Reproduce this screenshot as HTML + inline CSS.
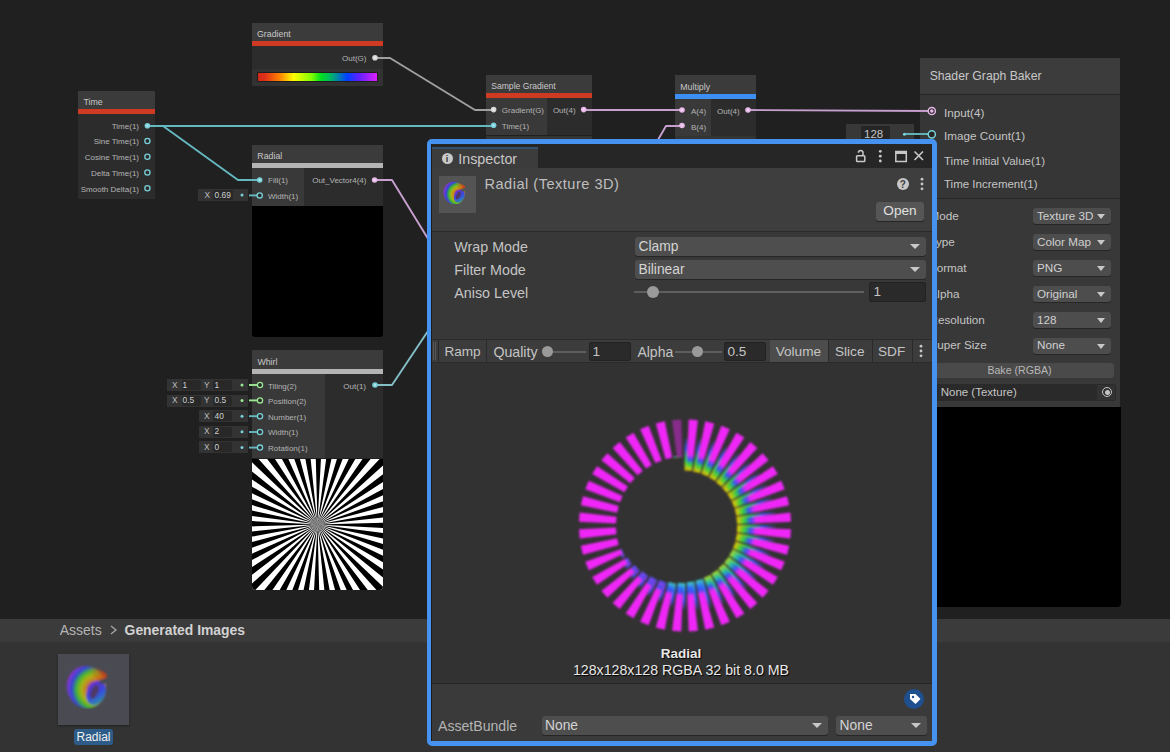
<!DOCTYPE html>
<html><head><meta charset="utf-8"><style>
html,body{margin:0;padding:0;width:1170px;height:752px;overflow:hidden;background:#202020;font-family:"Liberation Sans", sans-serif;}
body>div, #ins div{position:absolute;}
.t{white-space:pre;line-height:0;height:0;}
</style></head><body>
<div style="left:0px;top:0px;width:1170px;height:619px;background:#202020;"></div>
<div style="left:78px;top:91px;width:77px;height:18px;background:#3b3b3b;"></div>
<div style="left:78px;top:109px;width:77px;height:5px;background:#cf3a22;"></div>
<div style="left:78px;top:114px;width:77px;height:85px;background:#2c2c2c;"></div>
<div class="t" style="left:83.5px;top:101.95px;font-size:8.8px;color:#c8c8c8;font-weight:400;letter-spacing:0px;">Time</div>
<div class="t" style="right:1031px;top:126.53px;font-size:8px;color:#b4b4b4;font-weight:400;letter-spacing:0px;text-align:right;">Time(1)</div>
<div class="t" style="right:1031px;top:142.28px;font-size:8px;color:#b4b4b4;font-weight:400;letter-spacing:0px;text-align:right;">Sine Time(1)</div>
<div class="t" style="right:1031px;top:158.03px;font-size:8px;color:#b4b4b4;font-weight:400;letter-spacing:0px;text-align:right;">Cosine Time(1)</div>
<div class="t" style="right:1031px;top:173.78px;font-size:8px;color:#b4b4b4;font-weight:400;letter-spacing:0px;text-align:right;">Delta Time(1)</div>
<div class="t" style="right:1031px;top:189.53px;font-size:8px;color:#b4b4b4;font-weight:400;letter-spacing:0px;text-align:right;">Smooth Delta(1)</div>
<div style="left:252px;top:23px;width:131px;height:18px;background:#3b3b3b;"></div>
<div style="left:252px;top:41px;width:131px;height:5px;background:#cf3a22;"></div>
<div style="left:252px;top:46px;width:131px;height:23px;background:#2c2c2c;"></div>
<div style="left:252px;top:69px;width:131px;height:17px;background:#323232;"></div>
<div class="t" style="left:257px;top:33.95px;font-size:8.8px;color:#c8c8c8;font-weight:400;letter-spacing:0px;">Gradient</div>
<div class="t" style="right:803.5px;top:59.03px;font-size:8px;color:#b4b4b4;font-weight:400;letter-spacing:0px;text-align:right;">Out(G)</div>
<div style="left:258px;top:73px;width:119px;height:8px;background:linear-gradient(90deg,#d02a1a 0%,#e0301a 6%,#ff8000 18%,#ffff00 30%,#80ff00 45%,#00e020 53%,#00b070 62%,#0040ff 75%,#6020ff 85%,#e020ff 100%);outline:1px solid #1e1e1e"></div>
<div style="left:486px;top:75px;width:106px;height:18px;background:#3b3b3b;"></div>
<div style="left:486px;top:93px;width:106px;height:5px;background:#cf3a22;"></div>
<div style="left:486px;top:98px;width:106px;height:37px;background:#2c2c2c;"></div>
<div style="left:486px;top:98px;width:61px;height:37px;background:#393939;"></div>
<div style="left:486px;top:136px;width:106px;height:3px;background:#343434;"></div>
<div class="t" style="left:491.2px;top:86.02px;font-size:8.6px;color:#c8c8c8;font-weight:400;letter-spacing:0px;">Sample Gradient</div>
<div class="t" style="left:501.8px;top:111.03px;font-size:8px;color:#b4b4b4;font-weight:400;letter-spacing:0px;">Gradient(G)</div>
<div class="t" style="left:501.8px;top:126.83px;font-size:8px;color:#b4b4b4;font-weight:400;letter-spacing:0px;">Time(1)</div>
<div class="t" style="left:552.9px;top:111.03px;font-size:8px;color:#b4b4b4;font-weight:400;letter-spacing:0px;">Out(4)</div>
<div style="left:675px;top:75px;width:81px;height:19px;background:#3b3b3b;"></div>
<div style="left:675px;top:94px;width:81px;height:5px;background:#3d8ef2;"></div>
<div style="left:675px;top:99px;width:81px;height:37px;background:#2c2c2c;"></div>
<div style="left:675px;top:99px;width:36px;height:37px;background:#393939;"></div>
<div style="left:675px;top:136px;width:81px;height:3px;background:#343434;"></div>
<div class="t" style="left:680.3px;top:87.15px;font-size:8.8px;color:#c8c8c8;font-weight:400;letter-spacing:0px;">Multiply</div>
<div class="t" style="left:691px;top:112.03px;font-size:8px;color:#b4b4b4;font-weight:400;letter-spacing:0px;">A(4)</div>
<div class="t" style="left:691px;top:127.63px;font-size:8px;color:#b4b4b4;font-weight:400;letter-spacing:0px;">B(4)</div>
<div class="t" style="left:717px;top:112.03px;font-size:8px;color:#b4b4b4;font-weight:400;letter-spacing:0px;">Out(4)</div>
<div style="left:252px;top:145px;width:131px;height:18px;background:#3b3b3b;"></div>
<div style="left:252px;top:163px;width:131px;height:5px;background:#b4b4b4;"></div>
<div style="left:252px;top:168px;width:131px;height:38px;background:#2c2c2c;"></div>
<div style="left:252px;top:168px;width:52px;height:38px;background:#393939;"></div>
<div style="left:252px;top:206px;width:131px;height:131px;background:#000000;border-radius:0 0 3px 3px"></div>
<div class="t" style="left:257.3px;top:155.95px;font-size:8.8px;color:#c8c8c8;font-weight:400;letter-spacing:0px;">Radial</div>
<div class="t" style="left:268px;top:181.03px;font-size:8px;color:#b4b4b4;font-weight:400;letter-spacing:0px;">Fill(1)</div>
<div class="t" style="left:268px;top:196.93px;font-size:8px;color:#b4b4b4;font-weight:400;letter-spacing:0px;">Width(1)</div>
<div class="t" style="right:803.6px;top:181.03px;font-size:8px;color:#b4b4b4;font-weight:400;letter-spacing:0px;text-align:right;">Out_Vector4(4)</div>
<div style="left:198px;top:189px;width:50px;height:12px;background:#333333;"></div>
<div style="left:213px;top:190px;width:20px;height:10px;background:#282828;border-radius:2px"></div>
<div class="t" style="left:204.5px;top:195.09px;font-size:8.4px;color:#bdbdbd;font-weight:400;letter-spacing:0px;">X</div>
<div class="t" style="left:214.5px;top:195.09px;font-size:8.4px;color:#cfcfcf;font-weight:400;letter-spacing:0px;">0.69</div>
<div style="left:252px;top:350px;width:131px;height:19px;background:#3b3b3b;"></div>
<div style="left:252px;top:369px;width:131px;height:5px;background:#b4b4b4;"></div>
<div style="left:252px;top:374px;width:131px;height:84px;background:#2c2c2c;"></div>
<div style="left:252px;top:374px;width:73px;height:84px;background:#393939;"></div>
<div class="t" style="left:257.4px;top:361.95px;font-size:8.8px;color:#c8c8c8;font-weight:400;letter-spacing:0px;">Whirl</div>
<div class="t" style="left:268px;top:386.53px;font-size:8px;color:#b4b4b4;font-weight:400;letter-spacing:0px;">Tiling(2)</div>
<div class="t" style="left:268px;top:402.13px;font-size:8px;color:#b4b4b4;font-weight:400;letter-spacing:0px;">Position(2)</div>
<div class="t" style="left:268px;top:417.73px;font-size:8px;color:#b4b4b4;font-weight:400;letter-spacing:0px;">Number(1)</div>
<div class="t" style="left:268px;top:433.33px;font-size:8px;color:#b4b4b4;font-weight:400;letter-spacing:0px;">Width(1)</div>
<div class="t" style="left:268px;top:448.93px;font-size:8px;color:#b4b4b4;font-weight:400;letter-spacing:0px;">Rotation(1)</div>
<div class="t" style="right:804px;top:386.53px;font-size:8px;color:#b4b4b4;font-weight:400;letter-spacing:0px;text-align:right;">Out(1)</div>
<div style="left:167px;top:379.0px;width:81px;height:12px;background:#333333;"></div>
<div style="left:181.5px;top:380.0px;width:19px;height:10px;background:#282828;border-radius:2px"></div>
<div style="left:213.3px;top:380.0px;width:19px;height:10px;background:#282828;border-radius:2px"></div>
<div class="t" style="left:172px;top:384.69px;font-size:8.4px;color:#bdbdbd;font-weight:400;letter-spacing:0px;">X</div>
<div class="t" style="left:182.5px;top:384.69px;font-size:8.4px;color:#cfcfcf;font-weight:400;letter-spacing:0px;">1</div>
<div class="t" style="left:204px;top:384.69px;font-size:8.4px;color:#bdbdbd;font-weight:400;letter-spacing:0px;">Y</div>
<div class="t" style="left:214.5px;top:384.69px;font-size:8.4px;color:#cfcfcf;font-weight:400;letter-spacing:0px;">1</div>
<div style="left:167px;top:394.6px;width:81px;height:12px;background:#333333;"></div>
<div style="left:181.5px;top:395.6px;width:19px;height:10px;background:#282828;border-radius:2px"></div>
<div style="left:213.3px;top:395.6px;width:19px;height:10px;background:#282828;border-radius:2px"></div>
<div class="t" style="left:172px;top:400.29px;font-size:8.4px;color:#bdbdbd;font-weight:400;letter-spacing:0px;">X</div>
<div class="t" style="left:182.5px;top:400.29px;font-size:8.4px;color:#cfcfcf;font-weight:400;letter-spacing:0px;">0.5</div>
<div class="t" style="left:204px;top:400.29px;font-size:8.4px;color:#bdbdbd;font-weight:400;letter-spacing:0px;">Y</div>
<div class="t" style="left:214.5px;top:400.29px;font-size:8.4px;color:#cfcfcf;font-weight:400;letter-spacing:0px;">0.5</div>
<div style="left:199px;top:410.2px;width:49px;height:12px;background:#333333;"></div>
<div style="left:213.3px;top:411.2px;width:19px;height:10px;background:#282828;border-radius:2px"></div>
<div class="t" style="left:204px;top:415.89px;font-size:8.4px;color:#bdbdbd;font-weight:400;letter-spacing:0px;">X</div>
<div class="t" style="left:214.5px;top:415.89px;font-size:8.4px;color:#cfcfcf;font-weight:400;letter-spacing:0px;">40</div>
<div style="left:199px;top:425.8px;width:49px;height:12px;background:#333333;"></div>
<div style="left:213.3px;top:426.8px;width:19px;height:10px;background:#282828;border-radius:2px"></div>
<div class="t" style="left:204px;top:431.49px;font-size:8.4px;color:#bdbdbd;font-weight:400;letter-spacing:0px;">X</div>
<div class="t" style="left:214.5px;top:431.49px;font-size:8.4px;color:#cfcfcf;font-weight:400;letter-spacing:0px;">2</div>
<div style="left:199px;top:441.4px;width:49px;height:12px;background:#333333;"></div>
<div style="left:213.3px;top:442.4px;width:19px;height:10px;background:#282828;border-radius:2px"></div>
<div class="t" style="left:204px;top:447.09px;font-size:8.4px;color:#bdbdbd;font-weight:400;letter-spacing:0px;">X</div>
<div class="t" style="left:214.5px;top:447.09px;font-size:8.4px;color:#cfcfcf;font-weight:400;letter-spacing:0px;">0</div>
<div style="left:252px;top:459px;width:131px;height:131px;background:#fff;overflow:hidden;border-radius:0 0 4px 4px"><svg width="131" height="131" viewBox="252 459 131 131" style="position:absolute;left:0;top:0"><path d="M317.5,524.5L517.4,519.3L517.2,535.0Z M317.5,524.5L515.8,550.6L513.1,566.1Z M317.5,524.5L509.3,581.3L504.2,596.2Z M317.5,524.5L498.0,610.6L490.7,624.5Z M317.5,524.5L482.3,637.8L472.9,650.4Z M317.5,524.5L462.6,662.2L451.3,673.1Z M317.5,524.5L439.3,683.2L426.4,692.2Z M317.5,524.5L412.9,700.3L398.8,707.2Z M317.5,524.5L384.3,713.0L369.3,717.7Z M317.5,524.5L353.9,721.2L338.4,723.4Z M317.5,524.5L322.7,724.4L307.0,724.2Z M317.5,524.5L291.4,722.8L275.9,720.1Z M317.5,524.5L260.7,716.3L245.8,711.2Z M317.5,524.5L231.4,705.0L217.5,697.7Z M317.5,524.5L204.2,689.3L191.6,679.9Z M317.5,524.5L179.8,669.6L168.9,658.3Z M317.5,524.5L158.8,646.3L149.8,633.4Z M317.5,524.5L141.7,619.9L134.8,605.8Z M317.5,524.5L129.0,591.3L124.3,576.3Z M317.5,524.5L120.8,560.9L118.6,545.4Z M317.5,524.5L117.6,529.7L117.8,514.0Z M317.5,524.5L119.2,498.4L121.9,482.9Z M317.5,524.5L125.7,467.7L130.8,452.8Z M317.5,524.5L137.0,438.4L144.3,424.5Z M317.5,524.5L152.7,411.2L162.1,398.6Z M317.5,524.5L172.4,386.8L183.7,375.9Z M317.5,524.5L195.7,365.8L208.6,356.8Z M317.5,524.5L222.1,348.7L236.2,341.8Z M317.5,524.5L250.7,336.0L265.7,331.3Z M317.5,524.5L281.1,327.8L296.6,325.6Z M317.5,524.5L312.3,324.6L328.0,324.8Z M317.5,524.5L343.6,326.2L359.1,328.9Z M317.5,524.5L374.3,332.7L389.2,337.8Z M317.5,524.5L403.6,344.0L417.5,351.3Z M317.5,524.5L430.8,359.7L443.4,369.1Z M317.5,524.5L455.2,379.4L466.1,390.7Z M317.5,524.5L476.2,402.7L485.2,415.6Z M317.5,524.5L493.3,429.1L500.2,443.2Z M317.5,524.5L506.0,457.7L510.7,472.7Z M317.5,524.5L514.2,488.1L516.4,503.6Z" fill="#000"/></svg></div>
<div style="left:920px;top:58px;width:200px;height:36px;background:#3c3c3c;"></div>
<div style="left:920px;top:94px;width:200px;height:1px;background:#262626;"></div>
<div style="left:920px;top:95px;width:200px;height:104px;background:#363636;"></div>
<div style="left:920px;top:198px;width:200px;height:1px;background:#262626;"></div>
<div style="left:920px;top:199px;width:200px;height:209px;background:#383838;"></div>
<div style="left:920px;top:407px;width:201px;height:200px;background:#000000;border-radius:0 0 4px 4px"></div>
<div class="t" style="left:929.7px;top:75.77px;font-size:12.2px;color:#c8c8c8;font-weight:400;letter-spacing:0px;">Shader Graph Baker</div>
<div class="t" style="left:944px;top:112.95px;font-size:11.7px;color:#c4c4c4;font-weight:400;letter-spacing:0px;">Input(4)</div>
<div class="t" style="left:944px;top:135.95px;font-size:11.7px;color:#c4c4c4;font-weight:400;letter-spacing:0px;">Image Count(1)</div>
<div class="t" style="left:944px;top:160.82px;font-size:11.5px;color:#c4c4c4;font-weight:400;letter-spacing:0px;">Time Initial Value(1)</div>
<div class="t" style="left:944px;top:184.02px;font-size:11.5px;color:#c4c4c4;font-weight:400;letter-spacing:0px;">Time Increment(1)</div>
<div style="left:846px;top:124px;width:68px;height:22px;background:#383838;"></div>
<div style="left:861px;top:126px;width:29px;height:18px;background:#262626;"></div>
<div class="t" style="left:864px;top:134.02px;font-size:11.5px;color:#c4c4c4;font-weight:400;letter-spacing:0px;">128</div>
<div class="t" style="left:929.5px;top:215.95px;font-size:11.7px;color:#c4c4c4;font-weight:400;letter-spacing:0px;">Mode</div>
<div style="left:1032.5px;top:208.3px;width:78.5px;height:16px;background:#4d4d4d;border-radius:3px;box-shadow:0 1px 0 #262626"></div>
<div class="t" style="left:1037px;top:215.95px;font-size:11.7px;color:#d0d0d0;font-weight:400;letter-spacing:0px;">Texture 3D</div>
<div style="left:1097px;top:214.3px;width:0;height:0;border-left:4.5px solid transparent;border-right:4.5px solid transparent;border-top:5px solid #c8c8c8"></div>
<div class="t" style="left:929.5px;top:241.85px;font-size:11.7px;color:#c4c4c4;font-weight:400;letter-spacing:0px;">Type</div>
<div style="left:1032.5px;top:234.20000000000002px;width:78.5px;height:16px;background:#4d4d4d;border-radius:3px;box-shadow:0 1px 0 #262626"></div>
<div class="t" style="left:1037px;top:241.85px;font-size:11.7px;color:#d0d0d0;font-weight:400;letter-spacing:0px;">Color Map</div>
<div style="left:1097px;top:240.20000000000002px;width:0;height:0;border-left:4.5px solid transparent;border-right:4.5px solid transparent;border-top:5px solid #c8c8c8"></div>
<div class="t" style="left:929.5px;top:267.75px;font-size:11.7px;color:#c4c4c4;font-weight:400;letter-spacing:0px;">Format</div>
<div style="left:1032.5px;top:260.1px;width:78.5px;height:16px;background:#4d4d4d;border-radius:3px;box-shadow:0 1px 0 #262626"></div>
<div class="t" style="left:1037px;top:267.75px;font-size:11.7px;color:#d0d0d0;font-weight:400;letter-spacing:0px;">PNG</div>
<div style="left:1097px;top:266.1px;width:0;height:0;border-left:4.5px solid transparent;border-right:4.5px solid transparent;border-top:5px solid #c8c8c8"></div>
<div class="t" style="left:929.5px;top:293.65px;font-size:11.7px;color:#c4c4c4;font-weight:400;letter-spacing:0px;">Alpha</div>
<div style="left:1032.5px;top:286.0px;width:78.5px;height:16px;background:#4d4d4d;border-radius:3px;box-shadow:0 1px 0 #262626"></div>
<div class="t" style="left:1037px;top:293.65px;font-size:11.7px;color:#d0d0d0;font-weight:400;letter-spacing:0px;">Original</div>
<div style="left:1097px;top:292.0px;width:0;height:0;border-left:4.5px solid transparent;border-right:4.5px solid transparent;border-top:5px solid #c8c8c8"></div>
<div class="t" style="left:929.5px;top:319.55px;font-size:11.7px;color:#c4c4c4;font-weight:400;letter-spacing:0px;">Resolution</div>
<div style="left:1032.5px;top:311.9px;width:78.5px;height:16px;background:#4d4d4d;border-radius:3px;box-shadow:0 1px 0 #262626"></div>
<div class="t" style="left:1037px;top:319.55px;font-size:11.7px;color:#d0d0d0;font-weight:400;letter-spacing:0px;">128</div>
<div style="left:1097px;top:317.9px;width:0;height:0;border-left:4.5px solid transparent;border-right:4.5px solid transparent;border-top:5px solid #c8c8c8"></div>
<div class="t" style="left:929.5px;top:345.45px;font-size:11.7px;color:#c4c4c4;font-weight:400;letter-spacing:0px;">Super Size</div>
<div style="left:1032.5px;top:337.8px;width:78.5px;height:16px;background:#4d4d4d;border-radius:3px;box-shadow:0 1px 0 #262626"></div>
<div class="t" style="left:1037px;top:345.45px;font-size:11.7px;color:#d0d0d0;font-weight:400;letter-spacing:0px;">None</div>
<div style="left:1097px;top:343.8px;width:0;height:0;border-left:4.5px solid transparent;border-right:4.5px solid transparent;border-top:5px solid #c8c8c8"></div>
<div style="left:924px;top:363px;width:190px;height:15px;background:#4a4a4a;border-radius:3px"></div>
<div class="t" style="left:719.5px;width:600px;top:369.83px;font-size:10.6px;color:#b8b8b8;font-weight:400;letter-spacing:0px;text-align:center;">Bake (RGBA)</div>
<div style="left:924px;top:384px;width:192px;height:17px;background:#2a2a2a;border-radius:3px"></div>
<div style="left:1097px;top:385px;width:18px;height:15px;background:#323232;"></div>
<div class="t" style="left:940.7px;top:391.52px;font-size:11.5px;color:#c4c4c4;font-weight:400;letter-spacing:0px;">None (Texture)</div>
<div style="left:1101.5px;top:387px;width:8px;height:8px;border:1.5px solid #c4c4c4;border-radius:50%"></div><div style="left:1104.5px;top:390px;width:5px;height:5px;background:#c4c4c4;border-radius:50%"></div>
<svg width="1170" height="619" style="position:absolute;left:0;top:0"><path d="M375,58 L390,58 L475,110 L493,110" fill="none" stroke="#a0a0a0" stroke-width="1.9" stroke-linejoin="round"/><path d="M147,126 L493,126" fill="none" stroke="#64b8c0" stroke-width="1.9" stroke-linejoin="round"/><path d="M150,126 L163,126 L238,180 L259,180" fill="none" stroke="#64b8c0" stroke-width="1.9" stroke-linejoin="round"/><path d="M584,110 L682,110" fill="none" stroke="#c8a0d0" stroke-width="1.9" stroke-linejoin="round"/><path d="M748,110 L932,111" fill="none" stroke="#c8a0d0" stroke-width="1.9" stroke-linejoin="round"/><path d="M375,180 L392,180 L430,242" fill="none" stroke="#c8a0d0" stroke-width="1.9" stroke-linejoin="round"/><path d="M375,385 L392,385 L430,328" fill="none" stroke="#84c0c8" stroke-width="1.9" stroke-linejoin="round"/><path d="M655,145 L666,126 L682,126" fill="none" stroke="#c8a0d0" stroke-width="1.9" stroke-linejoin="round"/><path d="M249,195.4 L259,195.4" fill="none" stroke="#64b8c0" stroke-width="1.9" stroke-linejoin="round"/><path d="M904,134 L932,134" fill="none" stroke="#64b8c0" stroke-width="1.9" stroke-linejoin="round"/><path d="M249,385 L260,385" fill="none" stroke="#9ae892" stroke-width="1.9" stroke-linejoin="round"/><path d="M249,400.4 L260,400.4" fill="none" stroke="#9ae892" stroke-width="1.9" stroke-linejoin="round"/><path d="M249,416.2 L260,416.2" fill="none" stroke="#64b8c0" stroke-width="1.9" stroke-linejoin="round"/><path d="M249,432 L260,432" fill="none" stroke="#64b8c0" stroke-width="1.9" stroke-linejoin="round"/><path d="M249,447.6 L260,447.6" fill="none" stroke="#64b8c0" stroke-width="1.9" stroke-linejoin="round"/><circle cx="147.4" cy="125.7" r="2.8" fill="#78d0d8"/><circle cx="147.4" cy="125.7" r="1.1" fill="#ffffff" opacity="0.5"/><circle cx="147.4" cy="141" r="2.6" fill="#2c2c2c" stroke="#78d0d8" stroke-width="1.3"/><circle cx="147.4" cy="156.7" r="2.6" fill="#2c2c2c" stroke="#78d0d8" stroke-width="1.3"/><circle cx="147.4" cy="172.5" r="2.6" fill="#2c2c2c" stroke="#78d0d8" stroke-width="1.3"/><circle cx="147.4" cy="188.2" r="2.6" fill="#2c2c2c" stroke="#78d0d8" stroke-width="1.3"/><circle cx="375" cy="57.7" r="2.8" fill="#d8d8d8"/><circle cx="375" cy="57.7" r="1.1" fill="#ffffff" opacity="0.5"/><circle cx="493.6" cy="109.6" r="2.8" fill="#d8d8d8"/><circle cx="493.6" cy="109.6" r="1.1" fill="#ffffff" opacity="0.5"/><circle cx="493.6" cy="125.3" r="2.8" fill="#78d0d8"/><circle cx="493.6" cy="125.3" r="1.1" fill="#ffffff" opacity="0.5"/><circle cx="583.7" cy="109.6" r="2.8" fill="#e8b8e8"/><circle cx="583.7" cy="109.6" r="1.1" fill="#ffffff" opacity="0.5"/><circle cx="682" cy="110" r="2.8" fill="#e8b8e8"/><circle cx="682" cy="110" r="1.1" fill="#ffffff" opacity="0.5"/><circle cx="682" cy="125.5" r="2.8" fill="#e8b8e8"/><circle cx="682" cy="125.5" r="1.1" fill="#ffffff" opacity="0.5"/><circle cx="748" cy="110" r="2.8" fill="#e8b8e8"/><circle cx="748" cy="110" r="1.1" fill="#ffffff" opacity="0.5"/><circle cx="259.7" cy="180" r="2.8" fill="#78d0d8"/><circle cx="259.7" cy="180" r="1.1" fill="#ffffff" opacity="0.5"/><circle cx="259.7" cy="195.4" r="2.6" fill="#2c2c2c" stroke="#78d0d8" stroke-width="1.3"/><circle cx="374.6" cy="180" r="2.8" fill="#e8b8e8"/><circle cx="374.6" cy="180" r="1.1" fill="#ffffff" opacity="0.5"/><circle cx="260" cy="385" r="2.6" fill="#2c2c2c" stroke="#9ae892" stroke-width="1.3"/><circle cx="260" cy="400.4" r="2.6" fill="#2c2c2c" stroke="#9ae892" stroke-width="1.3"/><circle cx="260" cy="416.2" r="2.6" fill="#2c2c2c" stroke="#78d0d8" stroke-width="1.3"/><circle cx="260" cy="432" r="2.6" fill="#2c2c2c" stroke="#78d0d8" stroke-width="1.3"/><circle cx="260" cy="447.6" r="2.6" fill="#2c2c2c" stroke="#78d0d8" stroke-width="1.3"/><circle cx="375" cy="385" r="2.8" fill="#78d0d8"/><circle cx="375" cy="385" r="1.1" fill="#ffffff" opacity="0.5"/><circle cx="242" cy="195" r="1.5" fill="#78d0d8"/><circle cx="242" cy="385" r="1.5" fill="#9ae892"/><circle cx="242" cy="400.6" r="1.5" fill="#9ae892"/><circle cx="242" cy="416.2" r="1.5" fill="#78d0d8"/><circle cx="242" cy="431.8" r="1.5" fill="#78d0d8"/><circle cx="242" cy="447.4" r="1.5" fill="#78d0d8"/><circle cx="904.4" cy="134.3" r="1.5" fill="#78d0d8"/><circle cx="931.8" cy="111" r="3.6" fill="#2c2c2c" stroke="#e8b8e8" stroke-width="1.5"/><circle cx="931.8" cy="111" r="1.8" fill="#e8b8e8"/><circle cx="931.8" cy="134.3" r="3.6" fill="#262626" stroke="#78d0d8" stroke-width="1.5"/></svg>
<div style="left:0px;top:619px;width:1170px;height:23px;background:#3b3b3b;"></div>
<div style="left:0px;top:642px;width:1170px;height:1px;background:#2a2a2a;"></div>
<div style="left:0px;top:642px;width:1170px;height:110px;background:#333333;"></div>
<div class="t" style="left:59.7px;top:630.15px;font-size:14px;color:#b4b4b4;font-weight:400;letter-spacing:0px;">Assets</div>
<svg width="10" height="12" style="position:absolute;left:108px;top:624px"><path d="M3,2 L8,6 L3,10" fill="none" stroke="#a8a8a8" stroke-width="1.3"/></svg>
<div class="t" style="left:124.6px;top:630.18px;font-size:13.9px;color:#d2d2d2;font-weight:700;letter-spacing:0px;">Generated Images</div>
<div style="left:58px;top:654px;width:71px;height:71px;background:#4a4b52;box-shadow:0 1px 2px #222"></div>
<svg width="46.0" height="46.0" viewBox="0 0 40 40" style="position:absolute;left:64px;top:663px"><defs><radialGradient id="sw64" cx="26.5" cy="25" r="25" gradientUnits="userSpaceOnUse"><stop offset="0" stop-color="#5020b0"/><stop offset="0.22" stop-color="#7a30e0"/><stop offset="0.34" stop-color="#d88a18"/><stop offset="0.5" stop-color="#b0c010"/><stop offset="0.66" stop-color="#40c030"/><stop offset="0.82" stop-color="#3048e0"/><stop offset="1" stop-color="#9030e0"/></radialGradient><linearGradient id="sh64" x1="0" y1="0" x2="1" y2="1"><stop offset="0" stop-color="#8020d0"/><stop offset="0.5" stop-color="#3848f0"/><stop offset="1" stop-color="#20b0a0"/></linearGradient><linearGradient id="tp64" x1="0" y1="0" x2="1" y2="0"><stop offset="0" stop-color="#e08010" stop-opacity="0"/><stop offset="1" stop-color="#e03a10"/></linearGradient><filter id="sf64"><feGaussianBlur stdDeviation="0.7"/></filter></defs><g filter="url(#sf64)" opacity="0.9"><ellipse cx="19.5" cy="21" rx="17" ry="18.5" transform="rotate(-15 19.5 21)" fill="url(#sw64)"/><path d="M20,4 C28,4 34,7 37,10 L36.5,16 L29,17 Z" fill="url(#tp64)"/><ellipse cx="28" cy="26" rx="8" ry="11" transform="rotate(25 28 26)" fill="url(#sh64)"/><ellipse cx="26.5" cy="25" rx="3.2" ry="6.5" transform="rotate(25 26.5 25)" fill="#50386a"/><path d="M30,15 L40,12 L40,17.5 L32,18.5 Z" fill="#4a4b52"/></g></svg>
<div style="left:74px;top:729px;width:39px;height:16px;background:#2d5c88;border-radius:3px"></div>
<div class="t" style="left:-206.5px;width:600px;top:737.24px;font-size:12px;color:#f0f0f0;font-weight:400;letter-spacing:0px;text-align:center;">Radial</div>
<div style="left:427px;top:139px;width:501px;height:597px;border:5px solid #4592f0;border-left-width:4px;border-radius:5px;background:#1c1c1c"></div>
<div style="left:432px;top:144px;width:500px;height:24px;background:#262626;"></div>
<div style="left:432px;top:147px;width:106px;height:21px;background:#3c3c3c;"></div>
<div style="left:432px;top:147px;width:106px;height:2px;background:#34506c;"></div>
<div style="left:432px;top:168px;width:500px;height:63px;background:#3e3e3e;"></div>
<div style="left:432px;top:231px;width:500px;height:1px;background:#2a2a2a;"></div>
<div style="left:432px;top:232px;width:500px;height:107px;background:#383838;"></div>
<div style="left:432px;top:339px;width:500px;height:24px;background:#3c3c3c;"></div>
<div style="left:432px;top:339px;width:500px;height:1px;background:#2c2c2c;"></div>
<div style="left:432px;top:362px;width:500px;height:1px;background:#2a2a2a;"></div>
<div style="left:432px;top:363px;width:500px;height:320px;background:#323232;"></div>
<div style="left:432px;top:683px;width:500px;height:1px;background:#262626;"></div>
<div style="left:432px;top:684px;width:500px;height:57px;background:#3a3a3a;"></div>
<div style="left:441.5px;top:152.5px;width:11px;height:11px;border-radius:50%;background:#c8c8c8"></div>
<div class="t" style="left:445.8px;top:159.18px;font-size:9px;color:#333;font-weight:700;letter-spacing:0px;">i</div>
<div class="t" style="left:458.3px;top:159.05px;font-size:14.3px;color:#c8c8c8;font-weight:400;letter-spacing:0px;">Inspector</div>
<svg width="80" height="20" style="position:absolute;left:850px;top:146px" viewBox="850 146 80 20"><rect x="856.6" y="155.8" width="8.2" height="5.8" rx="0.8" fill="none" stroke="#c8c8c8" stroke-width="1.5"/><path d="M858.4,152.8 a2.3,2.3 0 0 1 4.6,0 V155.8" fill="none" stroke="#c8c8c8" stroke-width="1.5"/><circle cx="880.3" cy="151.3" r="1.4" fill="#c8c8c8"/><circle cx="880.3" cy="156.2" r="1.4" fill="#c8c8c8"/><circle cx="880.3" cy="161" r="1.4" fill="#c8c8c8"/><rect x="895.8" y="151.5" width="10.5" height="10" fill="none" stroke="#c8c8c8" stroke-width="1.5"/><rect x="895.8" y="151.5" width="10.5" height="2.5" fill="#c8c8c8"/><path d="M914.5,151.5 L923,160 M923,151.5 L914.5,160" stroke="#c8c8c8" stroke-width="1.6"/></svg>
<div style="left:439px;top:176px;width:37px;height:37px;background:#545454;"></div>
<svg width="24.8" height="24.8" viewBox="0 0 40 40" style="position:absolute;left:441.5px;top:179.5px"><defs><radialGradient id="sw441" cx="26.5" cy="25" r="25" gradientUnits="userSpaceOnUse"><stop offset="0" stop-color="#5020b0"/><stop offset="0.22" stop-color="#7a30e0"/><stop offset="0.34" stop-color="#d88a18"/><stop offset="0.5" stop-color="#b0c010"/><stop offset="0.66" stop-color="#40c030"/><stop offset="0.82" stop-color="#3048e0"/><stop offset="1" stop-color="#9030e0"/></radialGradient><linearGradient id="sh441" x1="0" y1="0" x2="1" y2="1"><stop offset="0" stop-color="#8020d0"/><stop offset="0.5" stop-color="#3848f0"/><stop offset="1" stop-color="#20b0a0"/></linearGradient><linearGradient id="tp441" x1="0" y1="0" x2="1" y2="0"><stop offset="0" stop-color="#e08010" stop-opacity="0"/><stop offset="1" stop-color="#e03a10"/></linearGradient><filter id="sf441"><feGaussianBlur stdDeviation="0.7"/></filter></defs><g filter="url(#sf441)" opacity="0.9"><ellipse cx="19.5" cy="21" rx="17" ry="18.5" transform="rotate(-15 19.5 21)" fill="url(#sw441)"/><path d="M20,4 C28,4 34,7 37,10 L36.5,16 L29,17 Z" fill="url(#tp441)"/><ellipse cx="28" cy="26" rx="8" ry="11" transform="rotate(25 28 26)" fill="url(#sh441)"/><ellipse cx="26.5" cy="25" rx="3.2" ry="6.5" transform="rotate(25 26.5 25)" fill="#50386a"/><path d="M30,15 L40,12 L40,17.5 L32,18.5 Z" fill="#545454"/></g></svg>
<div class="t" style="left:484.5px;top:183.54px;font-size:14.6px;color:#bebebe;font-weight:400;letter-spacing:0.48px;">Radial (Texture 3D)</div>
<div style="left:897px;top:178px;width:12px;height:12px;border-radius:50%;background:#c8c8c8"></div>
<div class="t" style="left:899.8px;top:184.84px;font-size:10px;color:#3e3e3e;font-weight:700;letter-spacing:0px;">?</div>
<svg width="6" height="14" style="position:absolute;left:919px;top:177px"><circle cx="3" cy="2.2" r="1.4" fill="#c8c8c8"/><circle cx="3" cy="7" r="1.4" fill="#c8c8c8"/><circle cx="3" cy="11.8" r="1.4" fill="#c8c8c8"/></svg>
<div style="left:876px;top:202px;width:48px;height:19px;background:#565656;border-radius:3px;box-shadow:0 1px 0 #262626"></div>
<div class="t" style="left:600px;width:600px;top:211.29px;font-size:13.6px;color:#e0e0e0;font-weight:400;letter-spacing:0px;text-align:center;">Open</div>
<div class="t" style="left:454.3px;top:247.05px;font-size:14.3px;color:#c4c4c4;font-weight:400;letter-spacing:0px;">Wrap Mode</div>
<div class="t" style="left:454.3px;top:270.05px;font-size:14.3px;color:#c4c4c4;font-weight:400;letter-spacing:0px;">Filter Mode</div>
<div class="t" style="left:454.3px;top:292.55px;font-size:14.3px;color:#c4c4c4;font-weight:400;letter-spacing:0px;">Aniso Level</div>
<div style="left:635px;top:237px;width:291px;height:19px;background:#4e4e4e;border-radius:3px;box-shadow:0 1px 0 #262626"></div>
<div class="t" style="left:638.5px;top:247.02px;font-size:13.8px;color:#d4d4d4;font-weight:400;letter-spacing:0px;">Clamp</div>
<div style="left:910px;top:244px;width:0;height:0;border-left:5px solid transparent;border-right:5px solid transparent;border-top:5.5px solid #c8c8c8"></div>
<div style="left:635px;top:260px;width:291px;height:19px;background:#4e4e4e;border-radius:3px;box-shadow:0 1px 0 #262626"></div>
<div class="t" style="left:638.5px;top:270.02px;font-size:13.8px;color:#d4d4d4;font-weight:400;letter-spacing:0px;">Bilinear</div>
<div style="left:910px;top:267px;width:0;height:0;border-left:5px solid transparent;border-right:5px solid transparent;border-top:5.5px solid #c8c8c8"></div>
<div style="left:634px;top:291px;width:230px;height:1.5px;background:#5e5e5e;"></div>
<div style="left:646.5px;top:286px;width:12px;height:12px;border-radius:50%;background:#9a9a9a"></div>
<div style="left:869px;top:281.5px;width:57px;height:20px;background:#2a2a2a;border-radius:3px;box-shadow:inset 0 0 0 1px #222"></div>
<div class="t" style="left:873.5px;top:291.79px;font-size:13.6px;color:#c4c4c4;font-weight:400;letter-spacing:0px;">1</div>
<div style="left:433px;top:342px;width:3px;height:18px;background:transparent;border-left:1px solid #555;border-right:1px solid #555;width:1px"></div>
<div style="left:438px;top:340px;width:1px;height:22px;background:#2a2a2a;"></div>
<div style="left:486px;top:340px;width:1px;height:22px;background:#2a2a2a;"></div>
<div style="left:828px;top:340px;width:1px;height:22px;background:#2a2a2a;"></div>
<div style="left:872px;top:340px;width:1px;height:22px;background:#2a2a2a;"></div>
<div style="left:911.5px;top:340px;width:1px;height:22px;background:#2a2a2a;"></div>
<div style="left:770px;top:340px;width:58px;height:22px;background:#4c4c4c;"></div>
<div class="t" style="left:444.4px;top:351.79px;font-size:13.6px;color:#c4c4c4;font-weight:400;letter-spacing:0px;">Ramp</div>
<div class="t" style="left:493.4px;top:351.58px;font-size:14.2px;color:#c4c4c4;font-weight:400;letter-spacing:0px;">Quality</div>
<div style="left:550px;top:351px;width:36px;height:1.5px;background:#5e5e5e;"></div>
<div style="left:542px;top:345.5px;width:11px;height:11px;border-radius:50%;background:#9a9a9a"></div>
<div style="left:589px;top:342px;width:42px;height:19px;background:#2a2a2a;border-radius:3px;box-shadow:inset 0 0 0 1px #222"></div>
<div class="t" style="left:592.6px;top:352.29px;font-size:13.6px;color:#c4c4c4;font-weight:400;letter-spacing:0px;">1</div>
<div class="t" style="left:637.4px;top:351.65px;font-size:14px;color:#c4c4c4;font-weight:400;letter-spacing:0px;">Alpha</div>
<div style="left:675px;top:351px;width:47px;height:1.5px;background:#5e5e5e;"></div>
<div style="left:692px;top:345.5px;width:11px;height:11px;border-radius:50%;background:#9a9a9a"></div>
<div style="left:724px;top:342px;width:42px;height:19px;background:#2a2a2a;border-radius:3px;box-shadow:inset 0 0 0 1px #222"></div>
<div class="t" style="left:727.5px;top:352.29px;font-size:13.6px;color:#c4c4c4;font-weight:400;letter-spacing:0px;">0.5</div>
<div class="t" style="left:775.7px;top:351.79px;font-size:13.6px;color:#c4c4c4;font-weight:400;letter-spacing:0px;">Volume</div>
<div class="t" style="left:835px;top:351.79px;font-size:13.6px;color:#c4c4c4;font-weight:400;letter-spacing:0px;">Slice</div>
<div class="t" style="left:878px;top:351.79px;font-size:13.6px;color:#c4c4c4;font-weight:400;letter-spacing:0px;">SDF</div>
<svg width="6" height="14" style="position:absolute;left:917.7px;top:344px"><circle cx="3" cy="2.2" r="1.4" fill="#c8c8c8"/><circle cx="3" cy="7" r="1.4" fill="#c8c8c8"/><circle cx="3" cy="11.8" r="1.4" fill="#c8c8c8"/></svg>
<svg width="500" height="320" viewBox="432 363 500 320" style="position:absolute;left:432px;top:363px"><defs><linearGradient id="g0" x1="0" x2="1" y1="0" y2="0"><stop offset="0" stop-color="#f0c800"/><stop offset="0.124" stop-color="#30d040"/><stop offset="0.220" stop-color="#3a50f0"/><stop offset="0.316" stop-color="#f028f8"/><stop offset="1" stop-color="#f028f8"/></linearGradient><linearGradient id="sg0" x1="0" x2="1" y1="0" y2="0"><stop offset="0" stop-color="#f0c800"/><stop offset="0.3" stop-color="#30d040"/><stop offset="0.65" stop-color="#3a50f0"/><stop offset="1" stop-color="#3a50f0" stop-opacity="0"/></linearGradient><linearGradient id="g1" x1="0" x2="1" y1="0" y2="0"><stop offset="0" stop-color="#f0c800"/><stop offset="0.126" stop-color="#30d040"/><stop offset="0.225" stop-color="#3a50f0"/><stop offset="0.323" stop-color="#f028f8"/><stop offset="1" stop-color="#f028f8"/></linearGradient><linearGradient id="sg1" x1="0" x2="1" y1="0" y2="0"><stop offset="0" stop-color="#f0c800"/><stop offset="0.3" stop-color="#30d040"/><stop offset="0.65" stop-color="#3a50f0"/><stop offset="1" stop-color="#3a50f0" stop-opacity="0"/></linearGradient><linearGradient id="g2" x1="0" x2="1" y1="0" y2="0"><stop offset="0" stop-color="#f0c800"/><stop offset="0.129" stop-color="#30d040"/><stop offset="0.230" stop-color="#3a50f0"/><stop offset="0.330" stop-color="#f028f8"/><stop offset="1" stop-color="#f028f8"/></linearGradient><linearGradient id="sg2" x1="0" x2="1" y1="0" y2="0"><stop offset="0" stop-color="#f0c800"/><stop offset="0.3" stop-color="#30d040"/><stop offset="0.65" stop-color="#3a50f0"/><stop offset="1" stop-color="#3a50f0" stop-opacity="0"/></linearGradient><linearGradient id="g3" x1="0" x2="1" y1="0" y2="0"><stop offset="0" stop-color="#f0c800"/><stop offset="0.132" stop-color="#30d040"/><stop offset="0.234" stop-color="#3a50f0"/><stop offset="0.337" stop-color="#f028f8"/><stop offset="1" stop-color="#f028f8"/></linearGradient><linearGradient id="sg3" x1="0" x2="1" y1="0" y2="0"><stop offset="0" stop-color="#f0c800"/><stop offset="0.3" stop-color="#30d040"/><stop offset="0.65" stop-color="#3a50f0"/><stop offset="1" stop-color="#3a50f0" stop-opacity="0"/></linearGradient><linearGradient id="g4" x1="0" x2="1" y1="0" y2="0"><stop offset="0" stop-color="#f0c800"/><stop offset="0.135" stop-color="#30d040"/><stop offset="0.239" stop-color="#3a50f0"/><stop offset="0.344" stop-color="#f028f8"/><stop offset="1" stop-color="#f028f8"/></linearGradient><linearGradient id="sg4" x1="0" x2="1" y1="0" y2="0"><stop offset="0" stop-color="#f0c800"/><stop offset="0.3" stop-color="#30d040"/><stop offset="0.65" stop-color="#3a50f0"/><stop offset="1" stop-color="#3a50f0" stop-opacity="0"/></linearGradient><linearGradient id="g5" x1="0" x2="1" y1="0" y2="0"><stop offset="0" stop-color="#f0c800"/><stop offset="0.136" stop-color="#30d040"/><stop offset="0.243" stop-color="#3a50f0"/><stop offset="0.349" stop-color="#f028f8"/><stop offset="1" stop-color="#f028f8"/></linearGradient><linearGradient id="sg5" x1="0" x2="1" y1="0" y2="0"><stop offset="0" stop-color="#f0c800"/><stop offset="0.3" stop-color="#30d040"/><stop offset="0.65" stop-color="#3a50f0"/><stop offset="1" stop-color="#3a50f0" stop-opacity="0"/></linearGradient><linearGradient id="g6" x1="0" x2="1" y1="0" y2="0"><stop offset="0" stop-color="#f0c800"/><stop offset="0.138" stop-color="#30d040"/><stop offset="0.245" stop-color="#3a50f0"/><stop offset="0.352" stop-color="#f028f8"/><stop offset="1" stop-color="#f028f8"/></linearGradient><linearGradient id="sg6" x1="0" x2="1" y1="0" y2="0"><stop offset="0" stop-color="#f0c800"/><stop offset="0.3" stop-color="#30d040"/><stop offset="0.65" stop-color="#3a50f0"/><stop offset="1" stop-color="#3a50f0" stop-opacity="0"/></linearGradient><linearGradient id="g7" x1="0" x2="1" y1="0" y2="0"><stop offset="0" stop-color="#f0c800"/><stop offset="0.139" stop-color="#30d040"/><stop offset="0.247" stop-color="#3a50f0"/><stop offset="0.355" stop-color="#f028f8"/><stop offset="1" stop-color="#f028f8"/></linearGradient><linearGradient id="sg7" x1="0" x2="1" y1="0" y2="0"><stop offset="0" stop-color="#f0c800"/><stop offset="0.3" stop-color="#30d040"/><stop offset="0.65" stop-color="#3a50f0"/><stop offset="1" stop-color="#3a50f0" stop-opacity="0"/></linearGradient><linearGradient id="g8" x1="0" x2="1" y1="0" y2="0"><stop offset="0" stop-color="#f0c800"/><stop offset="0.140" stop-color="#30d040"/><stop offset="0.249" stop-color="#3a50f0"/><stop offset="0.358" stop-color="#f028f8"/><stop offset="1" stop-color="#f028f8"/></linearGradient><linearGradient id="sg8" x1="0" x2="1" y1="0" y2="0"><stop offset="0" stop-color="#f0c800"/><stop offset="0.3" stop-color="#30d040"/><stop offset="0.65" stop-color="#3a50f0"/><stop offset="1" stop-color="#3a50f0" stop-opacity="0"/></linearGradient><linearGradient id="g9" x1="0" x2="1" y1="0" y2="0"><stop offset="0" stop-color="#f0c800"/><stop offset="0.141" stop-color="#30d040"/><stop offset="0.251" stop-color="#3a50f0"/><stop offset="0.361" stop-color="#f028f8"/><stop offset="1" stop-color="#f028f8"/></linearGradient><linearGradient id="sg9" x1="0" x2="1" y1="0" y2="0"><stop offset="0" stop-color="#f0c800"/><stop offset="0.3" stop-color="#30d040"/><stop offset="0.65" stop-color="#3a50f0"/><stop offset="1" stop-color="#3a50f0" stop-opacity="0"/></linearGradient><linearGradient id="g10" x1="0" x2="1" y1="0" y2="0"><stop offset="0" stop-color="#f0c800"/><stop offset="0.141" stop-color="#30d040"/><stop offset="0.250" stop-color="#3a50f0"/><stop offset="0.359" stop-color="#f028f8"/><stop offset="1" stop-color="#f028f8"/></linearGradient><linearGradient id="sg10" x1="0" x2="1" y1="0" y2="0"><stop offset="0" stop-color="#f0c800"/><stop offset="0.3" stop-color="#30d040"/><stop offset="0.65" stop-color="#3a50f0"/><stop offset="1" stop-color="#3a50f0" stop-opacity="0"/></linearGradient><linearGradient id="g11" x1="0" x2="1" y1="0" y2="0"><stop offset="0" stop-color="#f0c800"/><stop offset="0.138" stop-color="#30d040"/><stop offset="0.246" stop-color="#3a50f0"/><stop offset="0.353" stop-color="#f028f8"/><stop offset="1" stop-color="#f028f8"/></linearGradient><linearGradient id="sg11" x1="0" x2="1" y1="0" y2="0"><stop offset="0" stop-color="#f0c800"/><stop offset="0.3" stop-color="#30d040"/><stop offset="0.65" stop-color="#3a50f0"/><stop offset="1" stop-color="#3a50f0" stop-opacity="0"/></linearGradient><linearGradient id="g12" x1="0" x2="1" y1="0" y2="0"><stop offset="0" stop-color="#f0c800"/><stop offset="0.136" stop-color="#30d040"/><stop offset="0.242" stop-color="#3a50f0"/><stop offset="0.347" stop-color="#f028f8"/><stop offset="1" stop-color="#f028f8"/></linearGradient><linearGradient id="sg12" x1="0" x2="1" y1="0" y2="0"><stop offset="0" stop-color="#f0c800"/><stop offset="0.3" stop-color="#30d040"/><stop offset="0.65" stop-color="#3a50f0"/><stop offset="1" stop-color="#3a50f0" stop-opacity="0"/></linearGradient><linearGradient id="g13" x1="0" x2="1" y1="0" y2="0"><stop offset="0" stop-color="#b0e020"/><stop offset="0.133" stop-color="#20c0a0"/><stop offset="0.237" stop-color="#3a50f0"/><stop offset="0.341" stop-color="#f028f8"/><stop offset="1" stop-color="#f028f8"/></linearGradient><linearGradient id="sg13" x1="0" x2="1" y1="0" y2="0"><stop offset="0" stop-color="#b0e020"/><stop offset="0.3" stop-color="#20c0a0"/><stop offset="0.65" stop-color="#3a50f0"/><stop offset="1" stop-color="#3a50f0" stop-opacity="0"/></linearGradient><linearGradient id="g14" x1="0" x2="1" y1="0" y2="0"><stop offset="0" stop-color="#b0e020"/><stop offset="0.131" stop-color="#20c0a0"/><stop offset="0.233" stop-color="#3a50f0"/><stop offset="0.335" stop-color="#f028f8"/><stop offset="1" stop-color="#f028f8"/></linearGradient><linearGradient id="sg14" x1="0" x2="1" y1="0" y2="0"><stop offset="0" stop-color="#b0e020"/><stop offset="0.3" stop-color="#20c0a0"/><stop offset="0.65" stop-color="#3a50f0"/><stop offset="1" stop-color="#3a50f0" stop-opacity="0"/></linearGradient><linearGradient id="g15" x1="0" x2="1" y1="0" y2="0"><stop offset="0" stop-color="#b0e020"/><stop offset="0.128" stop-color="#20c0a0"/><stop offset="0.227" stop-color="#3a50f0"/><stop offset="0.327" stop-color="#f028f8"/><stop offset="1" stop-color="#f028f8"/></linearGradient><linearGradient id="sg15" x1="0" x2="1" y1="0" y2="0"><stop offset="0" stop-color="#b0e020"/><stop offset="0.3" stop-color="#20c0a0"/><stop offset="0.65" stop-color="#3a50f0"/><stop offset="1" stop-color="#3a50f0" stop-opacity="0"/></linearGradient><linearGradient id="g16" x1="0" x2="1" y1="0" y2="0"><stop offset="0" stop-color="#b0e020"/><stop offset="0.124" stop-color="#20c0a0"/><stop offset="0.221" stop-color="#3a50f0"/><stop offset="0.317" stop-color="#f028f8"/><stop offset="1" stop-color="#f028f8"/></linearGradient><linearGradient id="sg16" x1="0" x2="1" y1="0" y2="0"><stop offset="0" stop-color="#b0e020"/><stop offset="0.3" stop-color="#20c0a0"/><stop offset="0.65" stop-color="#3a50f0"/><stop offset="1" stop-color="#3a50f0" stop-opacity="0"/></linearGradient><linearGradient id="g17" x1="0" x2="1" y1="0" y2="0"><stop offset="0" stop-color="#b0e020"/><stop offset="0.120" stop-color="#20c0a0"/><stop offset="0.214" stop-color="#3a50f0"/><stop offset="0.307" stop-color="#f028f8"/><stop offset="1" stop-color="#f028f8"/></linearGradient><linearGradient id="sg17" x1="0" x2="1" y1="0" y2="0"><stop offset="0" stop-color="#b0e020"/><stop offset="0.3" stop-color="#20c0a0"/><stop offset="0.65" stop-color="#3a50f0"/><stop offset="1" stop-color="#3a50f0" stop-opacity="0"/></linearGradient><linearGradient id="g18" x1="0" x2="1" y1="0" y2="0"><stop offset="0" stop-color="#40d0c0"/><stop offset="0.116" stop-color="#3070ff"/><stop offset="0.207" stop-color="#3a50f0"/><stop offset="0.297" stop-color="#f028f8"/><stop offset="1" stop-color="#f028f8"/></linearGradient><linearGradient id="sg18" x1="0" x2="1" y1="0" y2="0"><stop offset="0" stop-color="#40d0c0"/><stop offset="0.3" stop-color="#3070ff"/><stop offset="0.65" stop-color="#3a50f0"/><stop offset="1" stop-color="#3a50f0" stop-opacity="0"/></linearGradient><linearGradient id="g19" x1="0" x2="1" y1="0" y2="0"><stop offset="0" stop-color="#40d0c0"/><stop offset="0.112" stop-color="#3070ff"/><stop offset="0.200" stop-color="#3a50f0"/><stop offset="0.287" stop-color="#f028f8"/><stop offset="1" stop-color="#f028f8"/></linearGradient><linearGradient id="sg19" x1="0" x2="1" y1="0" y2="0"><stop offset="0" stop-color="#40d0c0"/><stop offset="0.3" stop-color="#3070ff"/><stop offset="0.65" stop-color="#3a50f0"/><stop offset="1" stop-color="#3a50f0" stop-opacity="0"/></linearGradient><linearGradient id="g20" x1="0" x2="1" y1="0" y2="0"><stop offset="0" stop-color="#40d0c0"/><stop offset="0.106" stop-color="#3070ff"/><stop offset="0.188" stop-color="#3a50f0"/><stop offset="0.271" stop-color="#f028f8"/><stop offset="1" stop-color="#f028f8"/></linearGradient><linearGradient id="sg20" x1="0" x2="1" y1="0" y2="0"><stop offset="0" stop-color="#40d0c0"/><stop offset="0.3" stop-color="#3070ff"/><stop offset="0.65" stop-color="#3a50f0"/><stop offset="1" stop-color="#3a50f0" stop-opacity="0"/></linearGradient><linearGradient id="g21" x1="0" x2="1" y1="0" y2="0"><stop offset="0" stop-color="#40d0c0"/><stop offset="0.097" stop-color="#3070ff"/><stop offset="0.173" stop-color="#3a50f0"/><stop offset="0.249" stop-color="#f028f8"/><stop offset="1" stop-color="#f028f8"/></linearGradient><linearGradient id="sg21" x1="0" x2="1" y1="0" y2="0"><stop offset="0" stop-color="#40d0c0"/><stop offset="0.3" stop-color="#3070ff"/><stop offset="0.65" stop-color="#3a50f0"/><stop offset="1" stop-color="#3a50f0" stop-opacity="0"/></linearGradient><linearGradient id="g22" x1="0" x2="1" y1="0" y2="0"><stop offset="0" stop-color="#5050f0"/><stop offset="0.088" stop-color="#8040f0"/><stop offset="0.157" stop-color="#3a50f0"/><stop offset="0.225" stop-color="#f028f8"/><stop offset="1" stop-color="#f028f8"/></linearGradient><linearGradient id="sg22" x1="0" x2="1" y1="0" y2="0"><stop offset="0" stop-color="#5050f0"/><stop offset="0.3" stop-color="#8040f0"/><stop offset="0.65" stop-color="#3a50f0"/><stop offset="1" stop-color="#3a50f0" stop-opacity="0"/></linearGradient><linearGradient id="g23" x1="0" x2="1" y1="0" y2="0"><stop offset="0" stop-color="#5050f0"/><stop offset="0.078" stop-color="#8040f0"/><stop offset="0.139" stop-color="#3a50f0"/><stop offset="0.200" stop-color="#f028f8"/><stop offset="1" stop-color="#f028f8"/></linearGradient><linearGradient id="sg23" x1="0" x2="1" y1="0" y2="0"><stop offset="0" stop-color="#5050f0"/><stop offset="0.3" stop-color="#8040f0"/><stop offset="0.65" stop-color="#3a50f0"/><stop offset="1" stop-color="#3a50f0" stop-opacity="0"/></linearGradient><linearGradient id="g24" x1="0" x2="1" y1="0" y2="0"><stop offset="0" stop-color="#5050f0"/><stop offset="0.068" stop-color="#8040f0"/><stop offset="0.121" stop-color="#3a50f0"/><stop offset="0.174" stop-color="#f028f8"/><stop offset="1" stop-color="#f028f8"/></linearGradient><linearGradient id="sg24" x1="0" x2="1" y1="0" y2="0"><stop offset="0" stop-color="#5050f0"/><stop offset="0.3" stop-color="#8040f0"/><stop offset="0.65" stop-color="#3a50f0"/><stop offset="1" stop-color="#3a50f0" stop-opacity="0"/></linearGradient><linearGradient id="g25" x1="0" x2="1" y1="0" y2="0"><stop offset="0" stop-color="#5050f0"/><stop offset="0.055" stop-color="#8040f0"/><stop offset="0.097" stop-color="#3a50f0"/><stop offset="0.139" stop-color="#f028f8"/><stop offset="1" stop-color="#f028f8"/></linearGradient><linearGradient id="sg25" x1="0" x2="1" y1="0" y2="0"><stop offset="0" stop-color="#5050f0"/><stop offset="0.3" stop-color="#8040f0"/><stop offset="0.65" stop-color="#3a50f0"/><stop offset="1" stop-color="#3a50f0" stop-opacity="0"/></linearGradient><linearGradient id="g26" x1="0" x2="1" y1="0" y2="0"><stop offset="0" stop-color="#5050f0"/><stop offset="0.037" stop-color="#8040f0"/><stop offset="0.066" stop-color="#3a50f0"/><stop offset="0.094" stop-color="#f028f8"/><stop offset="1" stop-color="#f028f8"/></linearGradient><linearGradient id="sg26" x1="0" x2="1" y1="0" y2="0"><stop offset="0" stop-color="#5050f0"/><stop offset="0.3" stop-color="#8040f0"/><stop offset="0.65" stop-color="#3a50f0"/><stop offset="1" stop-color="#3a50f0" stop-opacity="0"/></linearGradient><linearGradient id="g27" x1="0" x2="1" y1="0" y2="0"><stop offset="0" stop-color="#5050f0"/><stop offset="0.018" stop-color="#8040f0"/><stop offset="0.031" stop-color="#3a50f0"/><stop offset="0.045" stop-color="#f028f8"/><stop offset="1" stop-color="#f028f8"/></linearGradient><linearGradient id="sg27" x1="0" x2="1" y1="0" y2="0"><stop offset="0" stop-color="#5050f0"/><stop offset="0.3" stop-color="#8040f0"/><stop offset="0.65" stop-color="#3a50f0"/><stop offset="1" stop-color="#3a50f0" stop-opacity="0"/></linearGradient><linearGradient id="g39" x1="0" x2="1" y1="0" y2="0"><stop offset="0" stop-color="#f0c800"/><stop offset="0.009" stop-color="#30d040"/><stop offset="0.016" stop-color="#3a50f0"/><stop offset="0.024" stop-color="#f028f8"/><stop offset="1" stop-color="#f028f8"/></linearGradient><linearGradient id="sg39" x1="0" x2="1" y1="0" y2="0"><stop offset="0" stop-color="#f0c800"/><stop offset="0.3" stop-color="#30d040"/><stop offset="0.65" stop-color="#3a50f0"/><stop offset="1" stop-color="#3a50f0" stop-opacity="0"/></linearGradient><filter id="bl"><feGaussianBlur stdDeviation="0.8"/></filter></defs><g filter="url(#bl)"><path d="M740.0,522.9 L773.6,521.7 L773.6,525.1 L740.0,525.1 Z" transform="rotate(-87.7 685 525.5)" fill="url(#sg0)"/><path d="M740.0,522.9 L791.0,520.9 L791.0,530.1 L740.0,528.1 Z" transform="rotate(-85.5 685 525.5)" fill="url(#g0)" opacity="1"/><path d="M739.5,522.9 L774.2,521.7 L774.2,525.1 L739.5,525.1 Z" transform="rotate(-78.7 685 525.5)" fill="url(#sg1)"/><path d="M739.5,522.9 L791.0,520.9 L791.0,530.1 L739.5,528.1 Z" transform="rotate(-76.5 685 525.5)" fill="url(#g1)" opacity="1"/><path d="M739.1,522.9 L774.9,521.7 L774.9,525.1 L739.1,525.1 Z" transform="rotate(-69.7 685 525.5)" fill="url(#sg2)"/><path d="M739.1,522.9 L791.0,520.9 L791.0,530.1 L739.1,528.1 Z" transform="rotate(-67.5 685 525.5)" fill="url(#g2)" opacity="1"/><path d="M738.7,522.9 L775.5,521.7 L775.5,525.1 L738.7,525.1 Z" transform="rotate(-60.7 685 525.5)" fill="url(#sg3)"/><path d="M738.7,522.9 L791.0,520.9 L791.0,530.1 L738.7,528.1 Z" transform="rotate(-58.5 685 525.5)" fill="url(#g3)" opacity="1"/><path d="M738.2,522.9 L776.1,521.7 L776.1,525.1 L738.2,525.1 Z" transform="rotate(-51.7 685 525.5)" fill="url(#sg4)"/><path d="M738.2,522.9 L791.0,520.9 L791.0,530.1 L738.2,528.1 Z" transform="rotate(-49.5 685 525.5)" fill="url(#g4)" opacity="1"/><path d="M737.9,522.9 L776.5,521.7 L776.5,525.1 L737.9,525.1 Z" transform="rotate(-42.7 685 525.5)" fill="url(#sg5)"/><path d="M737.9,522.9 L791.0,520.9 L791.0,530.1 L737.9,528.1 Z" transform="rotate(-40.5 685 525.5)" fill="url(#g5)" opacity="1"/><path d="M737.7,522.9 L776.8,521.7 L776.8,525.1 L737.7,525.1 Z" transform="rotate(-33.7 685 525.5)" fill="url(#sg6)"/><path d="M737.7,522.9 L791.0,520.9 L791.0,530.1 L737.7,528.1 Z" transform="rotate(-31.5 685 525.5)" fill="url(#g6)" opacity="1"/><path d="M737.5,522.9 L777.1,521.7 L777.1,525.1 L737.5,525.1 Z" transform="rotate(-24.7 685 525.5)" fill="url(#sg7)"/><path d="M737.5,522.9 L791.0,520.9 L791.0,530.1 L737.5,528.1 Z" transform="rotate(-22.5 685 525.5)" fill="url(#g7)" opacity="1"/><path d="M737.3,522.9 L777.4,521.7 L777.4,525.1 L737.3,525.1 Z" transform="rotate(-15.7 685 525.5)" fill="url(#sg8)"/><path d="M737.3,522.9 L791.0,520.9 L791.0,530.1 L737.3,528.1 Z" transform="rotate(-13.5 685 525.5)" fill="url(#g8)" opacity="1"/><path d="M737.1,522.9 L777.7,521.7 L777.7,525.1 L737.1,525.1 Z" transform="rotate(-6.7 685 525.5)" fill="url(#sg9)"/><path d="M737.1,522.9 L791.0,520.9 L791.0,530.1 L737.1,528.1 Z" transform="rotate(-4.5 685 525.5)" fill="url(#g9)" opacity="1"/><path d="M737.2,522.9 L777.5,521.7 L777.5,525.1 L737.2,525.1 Z" transform="rotate(2.3 685 525.5)" fill="url(#sg10)"/><path d="M737.2,522.9 L791.0,520.9 L791.0,530.1 L737.2,528.1 Z" transform="rotate(4.5 685 525.5)" fill="url(#g10)" opacity="1"/><path d="M737.6,522.9 L777.0,521.7 L777.0,525.1 L737.6,525.1 Z" transform="rotate(11.3 685 525.5)" fill="url(#sg11)"/><path d="M737.6,522.9 L791.0,520.9 L791.0,530.1 L737.6,528.1 Z" transform="rotate(13.5 685 525.5)" fill="url(#g11)" opacity="1"/><path d="M738.0,522.9 L776.4,521.7 L776.4,525.1 L738.0,525.1 Z" transform="rotate(20.3 685 525.5)" fill="url(#sg12)"/><path d="M738.0,522.9 L791.0,520.9 L791.0,530.1 L738.0,528.1 Z" transform="rotate(22.5 685 525.5)" fill="url(#g12)" opacity="1"/><path d="M738.4,522.9 L775.8,521.7 L775.8,525.1 L738.4,525.1 Z" transform="rotate(29.3 685 525.5)" fill="url(#sg13)"/><path d="M738.4,522.9 L791.0,520.9 L791.0,530.1 L738.4,528.1 Z" transform="rotate(31.5 685 525.5)" fill="url(#g13)" opacity="1"/><path d="M738.8,522.9 L775.3,521.7 L775.3,525.1 L738.8,525.1 Z" transform="rotate(38.3 685 525.5)" fill="url(#sg14)"/><path d="M738.8,522.9 L791.0,520.9 L791.0,530.1 L738.8,528.1 Z" transform="rotate(40.5 685 525.5)" fill="url(#g14)" opacity="1"/><path d="M739.3,522.9 L774.6,521.7 L774.6,525.1 L739.3,525.1 Z" transform="rotate(47.3 685 525.5)" fill="url(#sg15)"/><path d="M739.3,522.9 L791.0,520.9 L791.0,530.1 L739.3,528.1 Z" transform="rotate(49.5 685 525.5)" fill="url(#g15)" opacity="1"/><path d="M739.9,522.9 L773.7,521.7 L773.7,525.1 L739.9,525.1 Z" transform="rotate(56.3 685 525.5)" fill="url(#sg16)"/><path d="M739.9,522.9 L791.0,520.9 L791.0,530.1 L739.9,528.1 Z" transform="rotate(58.5 685 525.5)" fill="url(#g16)" opacity="1"/><path d="M740.5,522.9 L772.9,521.7 L772.9,525.1 L740.5,525.1 Z" transform="rotate(65.3 685 525.5)" fill="url(#sg17)"/><path d="M740.5,522.9 L791.0,520.9 L791.0,530.1 L740.5,528.1 Z" transform="rotate(67.5 685 525.5)" fill="url(#g17)" opacity="1"/><path d="M741.1,522.9 L772.1,521.7 L772.1,525.1 L741.1,525.1 Z" transform="rotate(74.3 685 525.5)" fill="url(#sg18)"/><path d="M741.1,522.9 L791.0,520.9 L791.0,530.1 L741.1,528.1 Z" transform="rotate(76.5 685 525.5)" fill="url(#g18)" opacity="1"/><path d="M741.7,522.9 L771.2,521.7 L771.2,525.1 L741.7,525.1 Z" transform="rotate(83.3 685 525.5)" fill="url(#sg19)"/><path d="M741.7,522.9 L791.0,520.9 L791.0,530.1 L741.7,528.1 Z" transform="rotate(85.5 685 525.5)" fill="url(#g19)" opacity="1"/><path d="M742.6,522.9 L770.0,521.7 L770.0,525.1 L742.6,525.1 Z" transform="rotate(92.3 685 525.5)" fill="url(#sg20)"/><path d="M742.6,522.9 L791.0,520.9 L791.0,530.1 L742.6,528.1 Z" transform="rotate(94.5 685 525.5)" fill="url(#g20)" opacity="1"/><path d="M743.8,522.9 L768.3,521.7 L768.3,525.1 L743.8,525.1 Z" transform="rotate(101.3 685 525.5)" fill="url(#sg21)"/><path d="M743.8,522.9 L791.0,520.9 L791.0,530.1 L743.8,528.1 Z" transform="rotate(103.5 685 525.5)" fill="url(#g21)" opacity="1"/><path d="M745.0,522.9 L766.6,521.7 L766.6,525.1 L745.0,525.1 Z" transform="rotate(110.3 685 525.5)" fill="url(#sg22)"/><path d="M745.0,522.9 L791.0,520.9 L791.0,530.1 L745.0,528.1 Z" transform="rotate(112.5 685 525.5)" fill="url(#g22)" opacity="1"/><path d="M746.2,522.9 L764.9,521.7 L764.9,525.1 L746.2,525.1 Z" transform="rotate(119.3 685 525.5)" fill="url(#sg23)"/><path d="M746.2,522.9 L791.0,520.9 L791.0,530.1 L746.2,528.1 Z" transform="rotate(121.5 685 525.5)" fill="url(#g23)" opacity="1"/><path d="M747.4,522.9 L763.2,521.7 L763.2,525.1 L747.4,525.1 Z" transform="rotate(128.3 685 525.5)" fill="url(#sg24)"/><path d="M747.4,522.9 L791.0,520.9 L791.0,530.1 L747.4,528.1 Z" transform="rotate(130.5 685 525.5)" fill="url(#g24)" opacity="1"/><path d="M748.9,522.9 L761.1,521.7 L761.1,525.1 L748.9,525.1 Z" transform="rotate(137.3 685 525.5)" fill="url(#sg25)"/><path d="M748.9,522.9 L791.0,520.9 L791.0,530.1 L748.9,528.1 Z" transform="rotate(139.5 685 525.5)" fill="url(#g25)" opacity="1"/><path d="M750.7,522.9 L758.6,521.7 L758.6,525.1 L750.7,525.1 Z" transform="rotate(146.3 685 525.5)" fill="url(#sg26)"/><path d="M750.7,522.9 L791.0,520.9 L791.0,530.1 L750.7,528.1 Z" transform="rotate(148.5 685 525.5)" fill="url(#g26)" opacity="1"/><path d="M752.5,522.9 L756.1,521.7 L756.1,525.1 L752.5,525.1 Z" transform="rotate(155.3 685 525.5)" fill="url(#sg27)"/><path d="M752.5,522.9 L791.0,520.9 L791.0,530.1 L752.5,528.1 Z" transform="rotate(157.5 685 525.5)" fill="url(#g27)" opacity="1"/><path d="M754.0,522.1 L791.0,520.9 L791.0,530.1 L754.0,528.9 Z" transform="rotate(166.5 685 525.5)" fill="#f028f8" opacity="1"/><path d="M754.0,522.1 L791.0,520.9 L791.0,530.1 L754.0,528.9 Z" transform="rotate(175.5 685 525.5)" fill="#f028f8" opacity="1"/><path d="M754.0,522.1 L791.0,520.9 L791.0,530.1 L754.0,528.9 Z" transform="rotate(184.5 685 525.5)" fill="#f028f8" opacity="1"/><path d="M754.0,522.1 L791.0,520.9 L791.0,530.1 L754.0,528.9 Z" transform="rotate(193.5 685 525.5)" fill="#f028f8" opacity="1"/><path d="M754.0,522.1 L791.0,520.9 L791.0,530.1 L754.0,528.9 Z" transform="rotate(202.5 685 525.5)" fill="#f028f8" opacity="1"/><path d="M754.0,522.1 L791.0,520.9 L791.0,530.1 L754.0,528.9 Z" transform="rotate(211.5 685 525.5)" fill="#f028f8" opacity="1"/><path d="M754.0,522.1 L791.0,520.9 L791.0,530.1 L754.0,528.9 Z" transform="rotate(220.5 685 525.5)" fill="#f028f8" opacity="1"/><path d="M754.0,522.1 L791.0,520.9 L791.0,530.1 L754.0,528.9 Z" transform="rotate(229.5 685 525.5)" fill="#f028f8" opacity="1"/><path d="M754.0,522.1 L791.0,520.9 L791.0,530.1 L754.0,528.9 Z" transform="rotate(238.5 685 525.5)" fill="#f028f8" opacity="1"/><path d="M754.0,522.1 L791.0,520.9 L791.0,530.1 L754.0,528.9 Z" transform="rotate(247.5 685 525.5)" fill="#f028f8" opacity="1"/><path d="M754.0,522.1 L791.0,520.9 L791.0,530.1 L754.0,528.9 Z" transform="rotate(256.5 685 525.5)" fill="#f028f8" opacity="1"/><path d="M753.2,522.9 L755.1,521.7 L755.1,525.1 L753.2,525.1 Z" transform="rotate(263.3 685 525.5)" fill="url(#sg39)"/><path d="M753.2,522.9 L791.0,520.9 L791.0,530.1 L753.2,528.1 Z" transform="rotate(265.5 685 525.5)" fill="url(#g39)" opacity="0.45"/></g></svg>
<div class="t" style="left:381px;width:600px;top:653.62px;font-size:13.5px;color:#e8e8e8;font-weight:700;letter-spacing:0px;text-align:center;text-shadow:1px 1px 1px #000">Radial</div>
<div class="t" style="left:381px;width:600px;top:669.88px;font-size:14.2px;color:#e8e8e8;font-weight:400;letter-spacing:0px;text-align:center;text-shadow:1px 1px 1px #000">128x128x128 RGBA 32 bit 8.0 MB</div>
<div style="left:904px;top:688.5px;width:20px;height:20px;border-radius:50%;background:#1e4f8f"></div>
<svg width="14" height="14" style="position:absolute;left:907.5px;top:691.5px" viewBox="0 0 14 14"><path d="M2,2 H7.5 L12.5,7 L7.5,12 L2,7 Z" fill="#ffffff" transform="rotate(0 7 7)"/><circle cx="5" cy="5" r="1.2" fill="#1e4f8f"/></svg>
<div class="t" style="left:438px;top:725.61px;font-size:14.1px;color:#b4b4b4;font-weight:400;letter-spacing:0px;">AssetBundle</div>
<div style="left:542px;top:716px;width:286px;height:19px;background:#4e4e4e;border-radius:3px;box-shadow:0 1px 0 #262626"></div>
<div class="t" style="left:545px;top:725.52px;font-size:13.8px;color:#d4d4d4;font-weight:400;letter-spacing:0px;">None</div>
<div style="left:812px;top:723px;width:0;height:0;border-left:5px solid transparent;border-right:5px solid transparent;border-top:5.5px solid #c8c8c8"></div>
<div style="left:836px;top:716px;width:91px;height:19px;background:#4e4e4e;border-radius:3px;box-shadow:0 1px 0 #262626"></div>
<div class="t" style="left:839.6px;top:725.52px;font-size:13.8px;color:#d4d4d4;font-weight:400;letter-spacing:0px;">None</div>
<div style="left:911px;top:723px;width:0;height:0;border-left:5px solid transparent;border-right:5px solid transparent;border-top:5.5px solid #c8c8c8"></div>
</body></html>
